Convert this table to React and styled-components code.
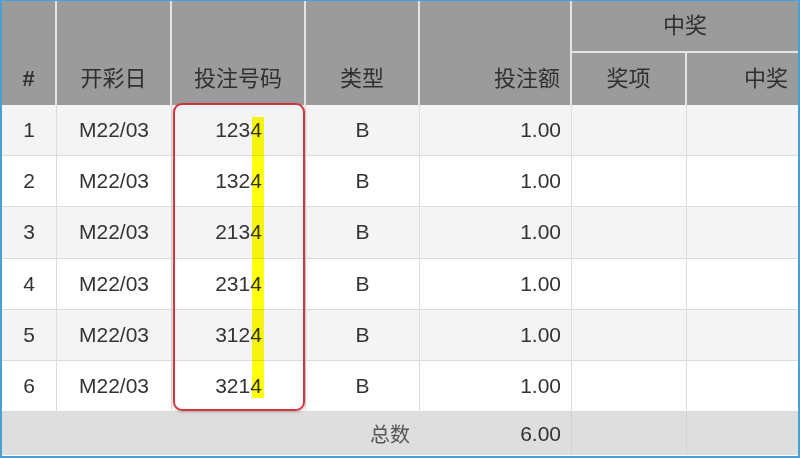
import React from "react";
import styled, { createGlobalStyle } from "styled-components";

const Global = createGlobalStyle`
  html, body { margin: 0; padding: 0; background: #fff; }
  body { font-family: "Liberation Sans", Arial, "Noto Sans CJK SC", sans-serif; }
`;

const Frame = styled.div`
  position: relative;
  width: 800px;
  height: 458px;
  box-sizing: border-box;
  border: 2px solid #4a9fd8;
  border-top-width: 1px;
  overflow: hidden;
  background: #fff;
`;

const Table = styled.table`
  width: 796px;
  table-layout: fixed;
  border-collapse: separate;
  border-spacing: 0;
  color: #333;
  font-size: 21px;
`;

const Th = styled.th`
  background: #9b9b9b;
  color: #303030;
  font-family: "Liberation Sans", "Noto Sans CJK SC", sans-serif;
  font-size: 22px;
  font-weight: ${(p) => (p.$bold ? 700 : 400)};
  text-align: ${(p) => p.$align || "center"};
  vertical-align: ${(p) => (p.$top ? "middle" : "bottom")};
  padding: ${(p) => (p.$top ? "0" : "0 10px 13px")};
  border-right: 2px solid #e4e4e4;
  border-bottom: ${(p) => (p.$top ? "2px solid #e4e4e4" : "0")};
  height: ${(p) => (p.$top ? "52px" : "auto")};
  line-height: 26px;
  box-sizing: border-box;
  &:last-child { border-right: 0; }
`;

const SubRow = styled.tr`
  height: 52px;
`;

const Row = styled.tr`
  height: 51.2px;
  background: ${(p) => (p.$odd ? "#f4f4f4" : "#ffffff")};
`;

const Td = styled.td`
  box-sizing: border-box;
  padding: 0 10px;
  text-align: ${(p) => p.$align || "center"};
  vertical-align: middle;
  border-right: 1px solid #dcdcdc;
  border-bottom: 1px solid #dcdcdc;
  line-height: 24px;
  &:last-child { border-right: 0; }
`;

const FootRow = styled.tr`
  height: 43px;
  background: #dedede;
`;

const FootCell = styled.td`
  padding: 0 10px;
  text-align: right;
  vertical-align: middle;
  border-right: ${(p) => (p.$line ? "1px solid #d2d2d2" : "0")};
  font-family: ${(p) => (p.$cjk ? '"Noto Sans CJK SC", sans-serif' : '"Liberation Sans", sans-serif')};
  font-size: ${(p) => (p.$cjk ? "20px" : "21px")};
  color: ${(p) => (p.$cjk ? "#555" : "#333")};
  line-height: 24px;
`;

const Highlight = styled.div`
  position: absolute;
  left: 250px;
  top: 116px;
  width: 12px;
  height: 281px;
  background: #ffff10;
  mix-blend-mode: multiply;
  pointer-events: none;
`;

const RedBox = styled.div`
  position: absolute;
  left: 171px;
  top: 102px;
  width: 132px;
  height: 308px;
  box-sizing: border-box;
  border: 2px solid #d4343c;
  border-radius: 9px;
  box-shadow: 0 1px 3px rgba(0, 0, 0, 0.25);
  pointer-events: none;
`;

const rows = [
  ["1", "M22/03", "1234", "B", "1.00"],
  ["2", "M22/03", "1324", "B", "1.00"],
  ["3", "M22/03", "2134", "B", "1.00"],
  ["4", "M22/03", "2314", "B", "1.00"],
  ["5", "M22/03", "3124", "B", "1.00"],
  ["6", "M22/03", "3214", "B", "1.00"],
];

const widths = [55, 115, 134, 114, 152, 115, 111];

export default function App() {
  return (
    <>
      <Global />
      <Frame>
        <Table>
          <colgroup>
            {widths.map((w, i) => (
              <col key={i} style={{ width: w }} />
            ))}
          </colgroup>
          <thead>
            <tr>
              <Th rowSpan={2} $bold>#</Th>
              <Th rowSpan={2}>开彩日</Th>
              <Th rowSpan={2}>投注号码</Th>
              <Th rowSpan={2}>类型</Th>
              <Th rowSpan={2} $align="right">投注额</Th>
              <Th colSpan={2} $top>中奖</Th>
            </tr>
            <SubRow>
              <Th>奖项</Th>
              <Th $align="right">中奖</Th>
            </SubRow>
          </thead>
          <tbody>
            {rows.map((r, i) => (
              <Row key={i} $odd={i % 2 === 0}>
                <Td>{r[0]}</Td>
                <Td>{r[1]}</Td>
                <Td>{r[2]}</Td>
                <Td>{r[3]}</Td>
                <Td $align="right">{r[4]}</Td>
                <Td />
                <Td />
              </Row>
            ))}
          </tbody>
          <tfoot>
            <FootRow>
              <FootCell colSpan={4} $cjk>总数</FootCell>
              <FootCell $line>6.00</FootCell>
              <FootCell $line />
              <FootCell />
            </FootRow>
          </tfoot>
        </Table>
        <Highlight />
        <RedBox />
      </Frame>
    </>
  );
}
